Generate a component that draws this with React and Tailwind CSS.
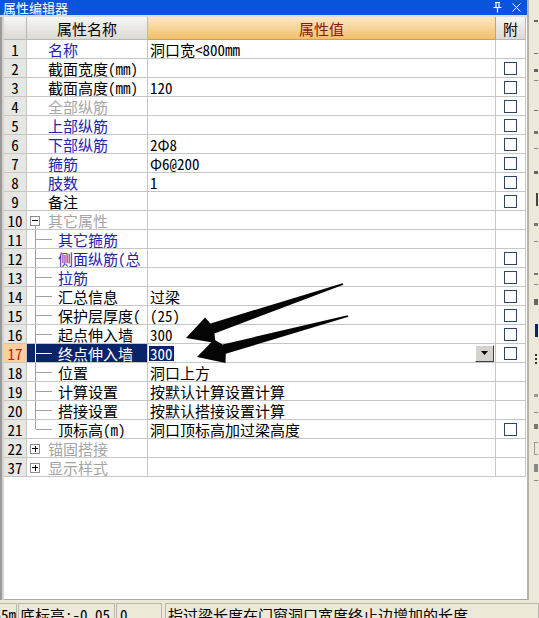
import React from 'react';

// 属性编辑器 — 过梁属性表
const rows = [
  { n: 1, name: '名称', tone: 'blue', value: '洞口宽<800mm' },
  { n: 2, name: '截面宽度(mm)', check: true },
  { n: 3, name: '截面高度(mm)', value: '120', check: true },
  { n: 4, name: '全部纵筋', tone: 'gray', check: true },
  { n: 5, name: '上部纵筋', tone: 'blue', check: true },
  { n: 6, name: '下部纵筋', tone: 'blue', value: '2Φ8', check: true },
  { n: 7, name: '箍筋', tone: 'blue', value: 'Φ6@200', check: true },
  { n: 8, name: '肢数', tone: 'blue', value: '1', check: true },
  { n: 9, name: '备注', check: true },
  { n: 10, name: '其它属性', tone: 'gray', tree: 'open' },
  { n: 11, name: '其它箍筋', tone: 'blue', tree: 'child' },
  { n: 12, name: '侧面纵筋(总', tone: 'blue', tree: 'child', check: true },
  { n: 13, name: '拉筋', tone: 'blue', tree: 'child', check: true },
  { n: 14, name: '汇总信息', tree: 'child', value: '过梁', check: true },
  { n: 15, name: '保护层厚度(', tree: 'child', value: '(25)', check: true },
  { n: 16, name: '起点伸入墙', tree: 'child', value: '300', check: true },
  { n: 17, name: '终点伸入墙', tree: 'child', value: '300', check: true, selected: true },
  { n: 18, name: '位置', tree: 'child', value: '洞口上方' },
  { n: 19, name: '计算设置', tree: 'child', value: '按默认计算设置计算' },
  { n: 20, name: '搭接设置', tree: 'child', value: '按默认搭接设置计算' },
  { n: 21, name: '顶标高(m)', tree: 'last', value: '洞口顶标高加过梁高度', check: true },
  { n: 22, name: '锚固搭接', tone: 'gray', tree: 'closed' },
  { n: 37, name: '显示样式', tone: 'gray', tree: 'closed' },
];

const toneClass = {
  blue: 'text-[#2222b0]',
  gray: 'text-[#a6a6a6]',
  black: 'text-black',
};

const cell = 'h-[19px] border-b border-r border-[#c6c6c6] overflow-hidden whitespace-nowrap';

function ToggleBox({ open }) {
  return (
    <div className="w-[10px] h-[10px] border border-[#8c8c8c] bg-white flex items-center justify-center relative shrink-0">
      <div className="w-[6px] h-px bg-black" />
      {!open && <div className="absolute w-px h-[6px] bg-black" />}
    </div>
  );
}

function NameCell({ r }) {
  const sel = r.selected;
  const line = sel ? 'bg-white' : 'bg-[#a0a0a0]';
  const color = sel ? 'text-white' : toneClass[r.tone || 'black'];

  if (r.tree === 'child' || r.tree === 'last') {
    return (
      <div className={`${cell} flex items-center ${sel ? 'bg-[#0a246a]' : 'bg-white'} ${color}`}>
        <div className="w-[8px] shrink-0" />
        {r.tree === 'child' ? (
          <div className={`w-px shrink-0 self-stretch -mb-px ${line}`} />
        ) : (
          <div className="w-px shrink-0 self-stretch flex flex-col">
            <div className={`h-[9px] ${line}`} />
          </div>
        )}
        <div className={`w-[16px] h-px shrink-0 ${line}`} />
        <span className="ml-[6px]">{r.name}</span>
      </div>
    );
  }

  if (r.tree === 'open' || r.tree === 'closed') {
    return (
      <div className={`${cell} flex items-center bg-white ${color}`}>
        <div className="w-[3px] shrink-0" />
        <div className="w-[10px] shrink-0 self-stretch -mb-px flex flex-col items-center">
          <div className="flex-1" />
          <ToggleBox open={r.tree === 'open'} />
          <div className={`flex-1 w-px ${r.tree === 'open' ? 'bg-[#a0a0a0]' : ''}`} />
        </div>
        <span className="ml-[8px]">{r.name}</span>
      </div>
    );
  }

  return (
    <div className={`${cell} flex items-center pl-[21px] bg-white ${color}`}>
      <span>{r.name}</span>
    </div>
  );
}

function ValueCell({ r }) {
  if (r.selected) {
    return (
      <div className={`${cell} flex items-center bg-white`}>
        <span className="ml-px bg-[#0a246a] text-white leading-[15px] px-px">{r.value}</span>
        <div className="flex-1" />
        <div className="w-[19px] h-[17px] mr-px bg-[#d6d3ce] border border-t-white border-l-white border-r-[#404040] border-b-[#404040] flex items-center justify-center">
          <svg width="7" height="4" viewBox="0 0 7 4">
            <path d="M0 0h7L3.5 4z" fill="#000" />
          </svg>
        </div>
      </div>
    );
  }
  return (
    <div className={`${cell} flex items-center pl-[2px] bg-white text-black`}>
      {r.value}
    </div>
  );
}

function Row({ r }) {
  return (
    <>
      <div
        className={`${cell} flex items-center justify-center ${
          r.selected ? 'bg-[#fbd09c] text-[#e01010]' : 'bg-[#e6e6e2] text-black'
        }`}
      >
        {r.n}
      </div>
      <NameCell r={r} />
      <ValueCell r={r} />
      <div className={`${cell} flex items-center justify-center bg-white`}>
        {r.check && <div className="w-[13px] h-[13px] border border-[#2c4664] bg-white" />}
      </div>
    </>
  );
}

// 两个手绘的黑色指示箭头
function Arrows() {
  return (
    <svg className="absolute left-0 top-0 pointer-events-none" width="539" height="618" viewBox="0 0 539 618">
      <polygon
        points="342.6,283.2 210.5,323.5 205,317.5 186,338 215.5,343 214.5,333.5 343.4,284.8"
        fill="#050505"
      />
      <polygon
        points="347.6,315.2 222.5,344.5 214,339.5 197,357 225.5,363 225.8,353.8 348.4,316.8"
        fill="#050505"
      />
    </svg>
  );
}

function TitleBar() {
  return (
    <div className="h-[15px] bg-[#0855dc] flex items-center text-white text-[13px] leading-[15px]">
      <span className="pl-[3px]">属性编辑器</span>
      <div className="flex-1" />
      <svg width="9" height="11" viewBox="0 0 9 11" className="mr-[10px]">
        <path d="M2 0.5h5M3 0.5v5M6 0.5v5M0.5 5.5h8M4.5 5.5v5" stroke="#fff" strokeWidth="1.2" fill="none" />
      </svg>
      <svg width="9" height="9" viewBox="0 0 9 9" className="mr-[6px]">
        <path d="M0.5 0.5l8 8M8.5 0.5l-8 8" stroke="#fff" strokeWidth="1" fill="none" />
      </svg>
    </div>
  );
}

function SidePanel() {
  // 右侧相邻面板露出的一窄条
  return (
    <div className="flex-1 flex bg-[#ece9d8]">
      <div className="w-[2px] bg-[#b5b2a8]" />
      <div className="flex-1 flex flex-col items-end pr-[1px]">
        <div className="mt-[20px] w-[4px] h-[2px] bg-[#666]" />
        <div className="mt-[31px] w-[4px] h-[1px] bg-[#777]" />
        <div className="mt-[15px] w-[4px] h-[3px] bg-[#666]" />
        <div className="mt-[8px] w-[4px] h-[1px] bg-[#888]" />
        <div className="mt-[29px] w-[4px] h-[1px] bg-[#777]" />
        <div className="mt-[20px] w-[4px] h-[3px] bg-[#777]" />
        <div className="mt-[14px] w-[4px] h-[1px] bg-[#888]" />
        <div className="mt-[22px] w-[4px] h-[3px] bg-[#666]" />
        <div className="mt-[19px] w-[2px] h-[13px] bg-[#444]" />
        <div className="mt-[17px] w-[4px] h-[3px] bg-[#777]" />
        <div className="mt-[15px] w-[4px] h-[1px] bg-[#888]" />
        <div className="mt-[31px] w-[4px] h-[2px] bg-[#777]" />
        <div className="mt-[9px] w-[4px] h-[1px] bg-[#888]" />
        <div className="mt-[14px] w-[4px] h-[6px] bg-[#666]" />
        <div className="mt-[19px] w-[3px] h-[13px] bg-[#0a246a]" />
        <div className="mt-[17px] w-[3px] h-[10px] border-l-2 border-dotted border-[#333]" />
        <div className="mt-[30px] w-[4px] h-[3px] bg-[#999]" />
        <div className="mt-[15px] w-[4px] h-[1px] bg-[#888]" />
        <div className="mt-[11px] w-[4px] h-[5px] bg-[#777]" />
        <div className="mt-[13px] w-[4px] h-[13px] border border-r-0 border-[#999]" />
        <div className="mt-[9px] w-[4px] h-[8px] bg-[#888]" />
        <div className="mt-[8px] w-[4px] h-[1px] bg-[#888]" />
      </div>
    </div>
  );
}

function StatusBar() {
  const panel = 'h-[15px] border border-b-0 border-[#b9b6ab] bg-[#ece9d8] overflow-hidden whitespace-nowrap leading-[22px]';
  return (
    <div className="h-[18px] flex items-end gap-[1px] bg-[#ece9d8] text-[15px] text-black">
      <div className={`${panel} w-[17px] flex justify-end border-l-0`}>
        <span>55m</span>
      </div>
      <div className={`${panel} w-[97px] pl-[1px]`}>底标高:-0.05</div>
      <div className={`${panel} w-[46px] pl-[3px]`}>0</div>
      <div className={`${panel} flex-1 ml-[2px] pl-[2px]`}>指过梁长度在门窗洞口宽度终止边增加的长度</div>
    </div>
  );
}

export default function App() {
  return (
    <div className="relative w-[539px] h-[618px] overflow-hidden bg-[#ece9d8] font-['Noto_Sans_Mono_CJK_SC','Noto_Sans_CJK_SC',sans-serif] text-[15px] leading-[19px]">
      <div className="h-[600px] flex">
        <div className="w-[527px] flex flex-col">
          <TitleBar />
          <div className="h-[2px] bg-[#dcdcdc]" />
          <div className="flex-1 flex">
            <div className="w-[4px] flex">
              <div className="w-[2px] bg-[#9a9a9a]" />
              <div className="w-[2px] bg-[#d6d3cc]" />
            </div>
            <div className="flex-1 bg-white border-b border-[#a8a8a8]">
              <div className="grid grid-cols-[23px_121px_348px_30px]">
                <div className="h-[23px] border-b border-r border-[#b8b8b8] bg-gradient-to-b from-[#f6f6f4] to-[#dcdad4]" />
                <div className="h-[23px] border-b border-r border-[#b8b8b8] bg-gradient-to-b from-[#f6f6f4] to-[#dcdad4] flex items-center justify-center text-black">
                  属性名称
                </div>
                <div className="h-[23px] border-b border-r border-[#c8a060] bg-gradient-to-b from-[#fde7c4] to-[#f1bf66] flex items-center justify-center text-[#8c1616]">
                  属性值
                </div>
                <div className="h-[23px] border-b border-r border-[#b8b8b8] bg-gradient-to-b from-[#f6f6f4] to-[#dcdad4] flex items-center justify-center text-black">
                  附
                </div>
                {rows.map((r) => (
                  <Row key={r.n} r={r} />
                ))}
              </div>
            </div>
          </div>
        </div>
        <SidePanel />
      </div>
      <StatusBar />
      <Arrows />
    </div>
  );
}
